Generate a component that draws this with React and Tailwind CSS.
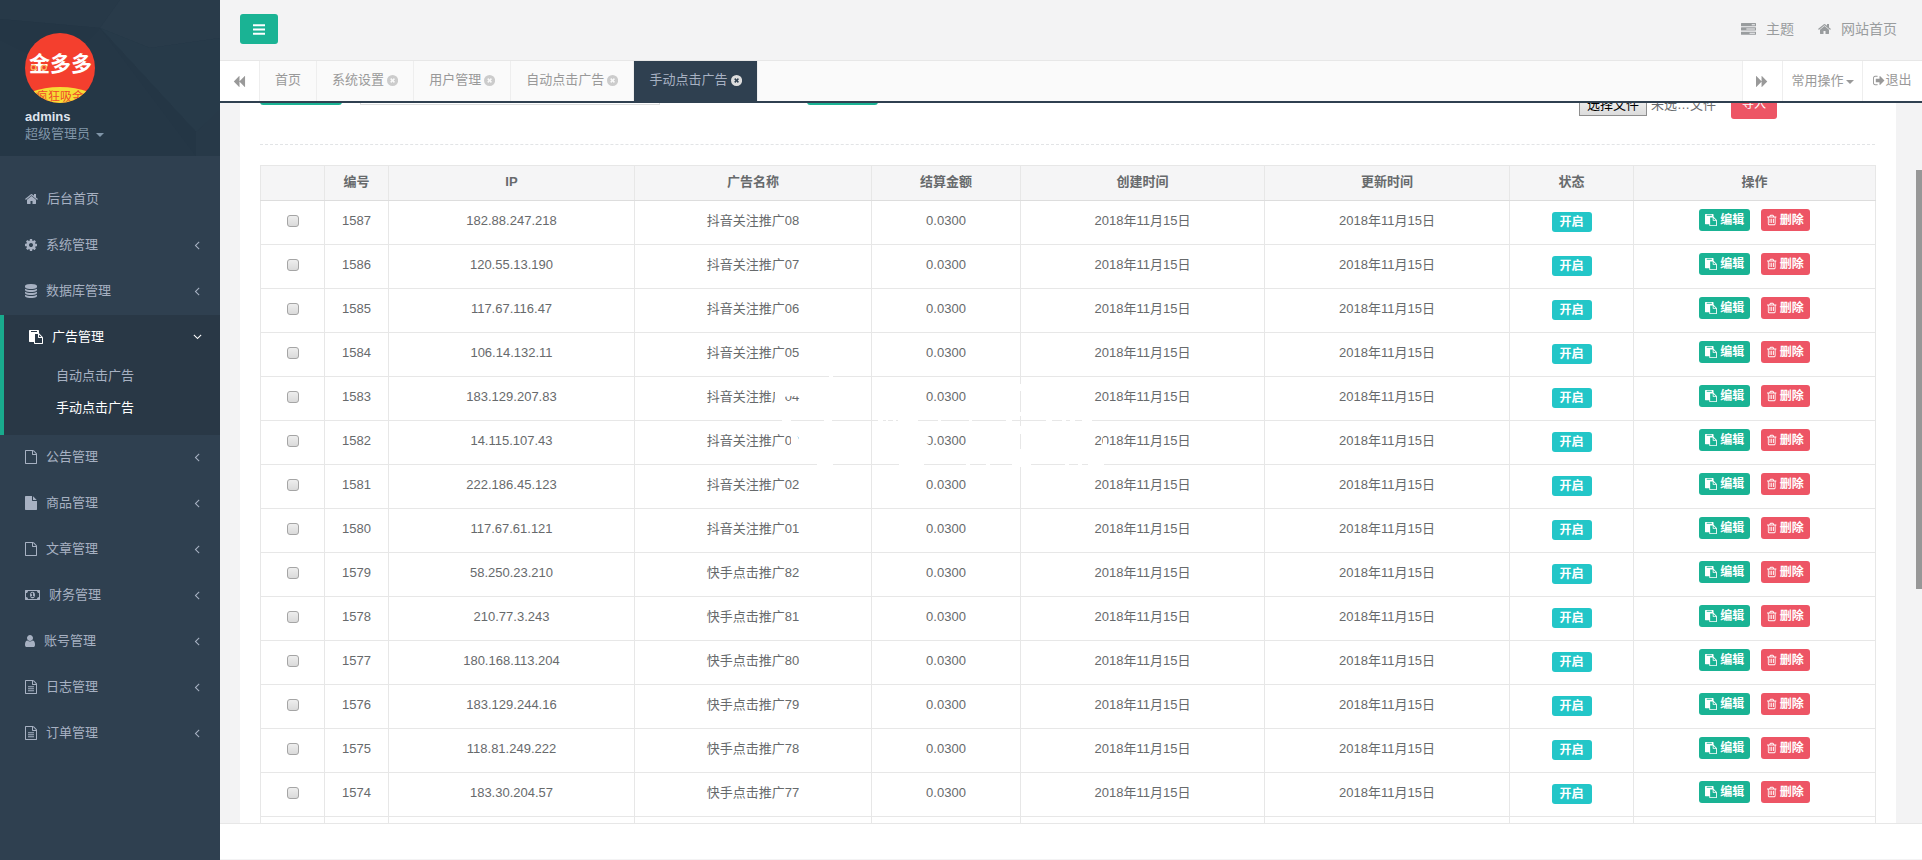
import React from "react";

const FILE_O =
  "M1596 380q28 28 48 76t20 88v1152q0 40-28 68t-68 28h-1344q-40 0-68-28t-28-68v-1600q0-40 28-68t68-28h896q40 0 88 20t76 48zm-444-244v376h376q-10-29-22-41l-313-313q-12-12-41-22zm384 1528v-1024h-416q-40 0-68-28t-28-68v-416h-768v1536h1280z";

const ICONS = {
  home: ["64 0 1664 1792", "M1472 992v480q0 26-19 45t-45 19h-384v-384h-256v384h-384q-26 0-45-19t-19-45v-480q0-1 .5-3t.5-3l575-474 575 474q1 2 1 6zm223-69l-62 74q-8 9-21 11h-3q-13 0-21-7l-692-577-692 577q-12 8-24 7-13-2-21-11l-62-74q-8-10-7-23.5t11-21.5l719-599q32-26 76-26t76 26l244 204v-195q0-14 9-23t23-9h192q14 0 23 9t9 23v408l219 182q10 8 11 21.5t-7 23.5z"],
  cog: ["128 0 1536 1792", "M1152 896q0-106-75-181t-181-75-181 75-75 181 75 181 181 75 181-75 75-181zm512-109v222q0 12-8 23t-20 13l-185 28q-19 54-39 91 35 50 107 138 10 12 10 25t-9 23q-27 37-99 108t-94 71q-12 0-26-9l-138-108q-44 23-91 38-16 136-29 186-7 28-36 28h-222q-14 0-24.5-8.5t-11.5-21.5l-28-184q-49-16-90-37l-141 107q-10 9-25 9-14 0-25-11-126-114-165-168-7-10-7-23 0-12 8-23 15-21 51-66.5t54-70.5q-27-50-41-99l-183-27q-13-2-21-12.5t-8-23.5v-222q0-12 8-23t19-13l186-28q14-46 39-92-40-57-107-138-10-12-10-24 0-10 9-23 26-36 98.5-107.5t94.5-71.5q13 0 26 10l138 107q44-23 91-38 16-136 29-186 7-28 36-28h222q14 0 24.5 8.5t11.5 21.5l28 184q49 16 90 37l142-107q9-9 24-9 13 0 25 10 129 119 165 170 7 8 7 22 0 12-8 23-15 21-51 66.5t-54 70.5q26 50 41 98l183 28q13 2 21 12.5t8 23.5z"],
  database: ["128 0 1536 1792", "M896 768q237 0 443-43t325-127v170q0 69-103 128t-280 93.5-385 34.5-385-34.5-280-93.5-103-128v-170q119 84 325 127t443 43zm0 768q237 0 443-43t325-127v170q0 69-103 128t-280 93.5-385 34.5-385-34.5-280-93.5-103-128v-170q119 84 325 127t443 43zm0-384q237 0 443-43t325-127v170q0 69-103 128t-280 93.5-385 34.5-385-34.5-280-93.5-103-128v-170q119 84 325 127t443 43zm0-1152q208 0 385 34.5t280 93.5 103 128v128q0 69-103 128t-280 93.5-385 34.5-385-34.5-280-93.5-103-128v-128q0-69 103-128t280-93.5 385-34.5z"],
  paste: ["0 0 1792 1792", "M768 1664h896v-640h-416q-40 0-68-28t-28-68v-416h-384v1152zm256-1440v-64q0-13-9.5-22.5t-22.5-9.5h-704q-13 0-22.5 9.5t-9.5 22.5v64q0 13 9.5 22.5t22.5 9.5h704q13 0 22.5-9.5t9.5-22.5zm256 672h299l-299-299v299zm512 128v672q0 40-28 68t-68 28h-960q-40 0-68-28t-28-68v-160h-544q-40 0-68-28t-28-68v-1344q0-40 28-68t68-28h1088q40 0 68 28t28 68v328q21 13 36 28l408 408q28 28 48 76t20 88z"],
  fileO: ["128 0 1536 1792", FILE_O],
  file: ["128 0 1536 1792", "M1152 512v-472q22 14 36 28l408 408q14 14 28 36h-472zm-128 32q0 40 28 68t68 28h544v1056q0 40-28 68t-68 28h-1344q-40 0-68-28t-28-68v-1600q0-40 28-68t68-28h800v544z"],
  fileText: ["128 0 1536 1792", FILE_O + "M512 832q0-14 9-23t23-9h704q14 0 23 9t9 23v64q0 14-9 23t-23 9h-704q-14 0-23-9t-9-23v-64zm736 224q14 0 23 9t9 23v64q0 14-9 23t-23 9h-704q-14 0-23-9t-9-23v-64q0-14 9-23t23-9h704zm0 256q14 0 23 9t9 23v64q0 14-9 23t-23 9h-704q-14 0-23-9t-9-23v-64q0-14 9-23t23-9h704z"],
  money: ["0 0 1920 1792", "M768 1152h384v-96h-128v-448h-114l-148 137 77 80q42-37 55-57h2v288h-128v96zm512-256q0 70-21 142t-59.5 134-101.5 101-138 39-138-39-101.5-101-59.5-134-21-142 21-142 59.5-134 101.5-101 138-39 138 39 101.5 101 59.5 134 21 142zm512 256v-512q-106 0-181-75t-75-181h-1152q0 106-75 181t-181 75v512q106 0 181 75t75 181h1152q0-106 75-181t181-75zm128-832v1152q0 26-19 45t-45 19h-1792q-26 0-45-19t-19-45v-1152q0-26 19-45t45-19h1792q26 0 45 19t19 45z"],
  user: ["256 0 1280 1792", "M1536 1399q0 109-62.5 187t-150.5 78h-854q-88 0-150.5-78t-62.5-187q0-85 8.500-160.500t31.500-152 58.500-131 94-89 134.500-34.500q131 128 313 128t313-128q76 0 134.500 34.500t94 89 58.500 131 31.500 152 8.500 160.500zm-256-887q0 159-112.500 271.500t-271.500 112.500-271.500-112.500-112.500-271.500 112.500-271.500 271.500-112.500 271.500 112.500 112.500 271.500z"],
  close: ["128 0 1536 1792", "M896 128a768 768 0 1 0 0 1536a768 768 0 1 0 0-1536zm-330 590l152-152 178 178 178-178 152 152-178 178 178 178-152 152-178-178-178 178-152-152 178-178z"],
  backward: ["64 0 1664 1792", "M1683 141q19-19 32-13t13 32v1472q0 26-13 32t-32-13l-710-710q-9-9-13-19v710q0 26-13 32t-32-13l-710-710q-19-19-19-45t19-45l710-710q19-19 32-13t13 32v710q4-10 13-19z"],
  signOut: ["64 0 1664 1792", "M704 1440q0 4 1 20t.5 26.5-3 23.5-10 19.5-20.5 6.5h-320q-119 0-203.500-84.500t-84.500-203.500v-704q0-119 84.500-203.500t203.500-84.500h320q13 0 22.500 9.500t9.500 22.500q0 4 1 20t.5 26.500-3 23.500-10 19.500-20.500 6.500h-320q-66 0-113 47t-47 113v704q0 66 47 113t113 47h312l11.500 1 11.500 3 8 5.500 7 9 2 13.500zm928-544q0 26-19 45l-544 544q-19 19-45 19t-45-19-19-45v-288h-448q-26 0-45-19t-19-45v-384q0-26 19-45t45-19h448v-288q0-26 19-45t45-19 45 19l544 544q19 19 19 45z"],
  trash: ["192 0 1408 1792", "M704 736v576q0 14-9 23t-23 9h-64q-14 0-23-9t-9-23v-576q0-14 9-23t23-9h64q14 0 23 9t9 23zm256 0v576q0 14-9 23t-23 9h-64q-14 0-23-9t-9-23v-576q0-14 9-23t23-9h64q14 0 23 9t9 23zm256 0v576q0 14-9 23t-23 9h-64q-14 0-23-9t-9-23v-576q0-14 9-23t23-9h64q14 0 23 9t9 23zm128 724v-948h-896v948q0 22 7 40.5t14.5 27 10.5 8.5h832q3 0 10.5-8.5t14.5-27 7-40.5zm-672-1076h448l-48-117q-7-9-17-11h-317q-10 2-17 11zm928 32v64q0 14-9 23t-23 9h-96v948q0 83-47 143.5t-113 60.5h-832q-66 0-113-58.5t-47-141.5v-952h-96q-14 0-23-9t-9-23v-64q0-14 9-23t23-9h309l70-167q15-37 54-63t79-26h320q40 0 79 26t54 63l70 167h309q14 0 23 9t9 23z"],
  tasks: ["0 0 1792 1792", "M1024 1408h640v-128h-640v128zm-384-512h1024v-128h-1024v128zm640-512h384v-128h-384v128zm512 832v256q0 26-19 45t-45 19h-1664q-26 0-45-19t-19-45v-256q0-26 19-45t45-19h1664q26 0 45 19t19 45zm0-512v256q0 26-19 45t-45 19h-1664q-26 0-45-19t-19-45v-256q0-26 19-45t45-19h1664q26 0 45 19t19 45zm0-512v256q0 26-19 45t-45 19h-1664q-26 0-45-19t-19-45v-256q0-26 19-45t45-19h1664q26 0 45 19t19 45z"],
  bars: ["128 0 1536 1792", "M1664 1344v128q0 26-19 45t-45 19h-1408q-26 0-45-19t-19-45v-128q0-26 19-45t45-19h1408q26 0 45 19t19 45zm0-512v128q0 26-19 45t-45 19h-1408q-26 0-45-19t-19-45v-128q0-26 19-45t45-19h1408q26 0 45 19t19 45zm0-512v128q0 26-19 45t-45 19h-1408q-26 0-45-19t-19-45v-128q0-26 19-45t45-19h1408q26 0 45 19t19 45z"],
  angleLeft: ["0 0 1792 1792", "M1203 544q0 13-10 23l-393 393 393 393q10 10 10 23t-10 23l-50 50q-10 10-23 10t-23-10l-466-466q-10-10-10-23t10-23l466-466q10-10 23-10t23 10l50 50q10 10 10 23z"],
};

function Icon({ name, className = "h-3.5" }) {
  const [viewBox, d] = ICONS[name];
  return (
    <svg viewBox={viewBox} className={`w-auto shrink-0 ${className}`} fill="currentColor" fillRule={name === "close" ? "evenodd" : "nonzero"} aria-hidden="true">
      <path d={d} />
    </svg>
  );
}

function Caret() {
  return <span className="mt-0.5 h-0 w-0 border-x-4 border-t-4 border-x-transparent border-t-current" />;
}

function Avatar() {
  return (
    <svg viewBox="0 0 70 70" className="h-[70px] w-[70px]" role="img" aria-label="金多多">
      <defs>
        <clipPath id="avatarClip">
          <circle cx="35" cy="35" r="35" />
        </clipPath>
      </defs>
      <g clipPath="url(#avatarClip)">
        <rect width="70" height="70" fill="#f43f2e" />
        <ellipse cx="35" cy="69" rx="39" ry="15" fill="#f6dc35" />
        <text x="35.5" y="38" textAnchor="middle" fontSize="21" fontWeight="700" fill="#fff" fontFamily="'Noto Sans CJK SC', sans-serif">
          金多多
        </text>
        <circle cx="8.5" cy="34.5" r="2.4" fill="#f43f2e" stroke="#f7b05a" strokeWidth="1.400" />
        <circle cx="19" cy="34.5" r="2.4" fill="#f43f2e" stroke="#f7b05a" strokeWidth="1.400" />
        <text x="35" y="68" textAnchor="middle" fontSize="12" fontWeight="400" fill="#ef4a2a" fontFamily="'Noto Sans CJK SC', sans-serif">
          疯狂吸金
        </text>
      </g>
    </svg>
  );
}

function ProfilePattern() {
  return (
    <svg viewBox="0 0 220 156" preserveAspectRatio="none" className="absolute inset-0 h-full w-full" aria-hidden="true">
      <rect width="220" height="156" fill="#253746" />
      <path d="M0 0H120L100 28 0 19Z" fill="#273948" />
      <path d="M120 0H220V38L150 48 100 28Z" fill="#293b4a" />
      <path d="M100 28L150 48 220 38V112L196 132Z" fill="#273a49" />
      <path d="M0 19L100 28 60 70 0 40Z" fill="#243645" />
      <path d="M100 28L196 132V156Z" fill="#243645" />
      <path d="M196 132L220 110V156H196Z" fill="#273948" />
    </svg>
  );
}

const MENU = [
  { icon: "home", label: "后台首页" },
  { icon: "cog", label: "系统管理", arrow: true },
  { icon: "database", label: "数据库管理", arrow: true },
  { icon: "paste", label: "广告管理", arrow: true, children: ["自动点击广告", "手动点击广告"] },
  { icon: "fileO", label: "公告管理", arrow: true },
  { icon: "file", label: "商品管理", arrow: true },
  { icon: "fileO", label: "文章管理", arrow: true },
  { icon: "money", label: "财务管理", arrow: true },
  { icon: "user", label: "账号管理", arrow: true },
  { icon: "fileText", label: "日志管理", arrow: true },
  { icon: "fileText", label: "订单管理", arrow: true },
];

function Sidebar() {
  return (
    <aside className="flex w-[220px] shrink-0 flex-col bg-[#2f4050] text-[#a7b1c2]">
      <div className="relative h-[156px]">
        <ProfilePattern />
        <div className="relative flex flex-col items-start px-[25px] pt-[33px]">
          <Avatar />
          <strong className="mt-[5px] leading-[18px] text-[#dfe4ed]">admins</strong>
          <button type="button" className="flex items-center gap-1.5 leading-4 text-[#8095a8]">
            超级管理员 <Caret />
          </button>
        </div>
      </div>
      <nav className="pt-[21px]">
        <ul>
          {MENU.map((item) => (
            <li key={item.label} className={item.children ? "border-l-4 border-[#19aa8d] bg-[#293846] pb-2.5" : ""}>
              <a
                href="#"
                className={`flex h-[46px] items-center gap-[9px] pr-4 pb-0.5 pl-[25px] ${item.children ? "text-white" : ""}`}
              >
                <Icon name={item.icon} />
                <span className="flex-1">{item.label}</span>
                {item.arrow && <Icon name="angleLeft" className={item.children ? "h-3.5 -rotate-90" : "h-3.5"} />}
              </a>
              {item.children && (
                <ul>
                  {item.children.map((child, i) => (
                    <li key={child}>
                      <a href="#" className={`flex h-8 items-center pb-0.5 pl-[52px] ${i === 1 ? "text-white" : ""}`}>
                        {child}
                      </a>
                    </li>
                  ))}
                </ul>
              )}
            </li>
          ))}
        </ul>
      </nav>
    </aside>
  );
}

const TABS = ["首页", "系统设置", "用户管理", "自动点击广告", "手动点击广告"];

function TabBar() {
  return (
    <div className="flex h-[42px] shrink-0 border-b-2 border-[#2f4050] bg-[#fafafa] text-[#999]">
      <button type="button" aria-label="向左" className="flex w-10 items-center justify-center border-r border-[#eee] bg-white">
        <Icon name="backward" className="h-[13px]" />
      </button>
      <nav className="flex flex-1">
        {TABS.map((tab, i) => (
          <a
            key={tab}
            href="#"
            className={`flex items-center gap-[3px] border-r border-[#eee] px-[15px] pb-0.5 ${i === 4 ? "bg-[#2f4050] text-[#a7b1c2]" : ""}`}
          >
            {tab}
            {i > 0 && <Icon name="close" className={i === 4 ? "h-[13px] text-[#ddd]" : "h-[13px] text-[#ccc]"} />}
          </a>
        ))}
      </nav>
      <button type="button" aria-label="向右" className="flex w-10 items-center justify-center border-l border-[#eee] bg-white">
        <Icon name="backward" className="h-[13px] rotate-180" />
      </button>
      <button type="button" className="flex w-20 items-center justify-center gap-0.5 border-l border-[#eee] bg-white">
        常用操作
        <Caret />
      </button>
      <a href="#" className="flex w-[60px] items-center justify-center border-l border-[#eee] bg-white pb-0.5">
        <Icon name="signOut" className="h-[13px]" />
        退出
      </a>
    </div>
  );
}

const IPS = [
  "182.88.247.218",
  "120.55.13.190",
  "117.67.116.47",
  "106.14.132.11",
  "183.129.207.83",
  "14.115.107.43",
  "222.186.45.123",
  "117.67.61.121",
  "58.250.23.210",
  "210.77.3.243",
  "180.168.113.204",
  "183.129.244.16",
  "118.81.249.222",
  "183.30.204.57",
];

const ROWS = IPS.map((ip, i) => ({
  id: 1587 - i,
  ip,
  name: i < 8 ? `抖音关注推广0${8 - i}` : `快手点击推广${90 - i}`,
}));

const CELL = "h-11 border border-[#e7e7e7] pb-1";

function AdTable() {
  return (
    <table className="w-full table-fixed border-collapse border border-[#e7e7e7] text-center">
      <colgroup>
        <col className="w-[64px]" />
        <col className="w-[64px]" />
        <col className="w-[246px]" />
        <col className="w-[237px]" />
        <col className="w-[149px]" />
        <col className="w-[244px]" />
        <col className="w-[245px]" />
        <col className="w-[124px]" />
        <col className="w-[242px]" />
      </colgroup>
      <thead>
        <tr className="bg-[#f5f5f6]">
          {["", "编号", "IP", "广告名称", "结算金额", "创建时间", "更新时间", "状态", "操作"].map((h) => (
            <th key={h} className="h-[35px] border border-[#e7e7e7] border-b-[#ddd] pb-0.5 font-bold">
              {h}
            </th>
          ))}
        </tr>
      </thead>
      <tbody>
        {ROWS.map((row) => (
          <tr key={row.id}>
            <td className={CELL}>
              <input
                type="checkbox"
                aria-label={`选择 ${row.id}`}
                className="mx-auto block h-3 w-3 appearance-none rounded-[3px] border border-[#a5a5a5] bg-linear-to-b from-[#eee] to-[#dadada]"
              />
            </td>
            <td className={CELL}>{row.id}</td>
            <td className={CELL}>{row.ip}</td>
            <td className={CELL}>{row.name}</td>
            <td className={CELL}>0.0300</td>
            <td className={CELL}>2018年11月15日</td>
            <td className={CELL}>2018年11月15日</td>
            <td className="border border-[#e7e7e7] pb-0.5">
              <span className="inline-flex h-5 w-10 items-center justify-center rounded-[3px] bg-[#23c6c8] align-middle text-xs font-bold text-white">
                开启
              </span>
            </td>
            <td className="border border-[#e7e7e7] pt-2 align-top">
              <div className="flex justify-center gap-[11px] text-xs font-bold text-white">
                <button type="button" className="flex h-[22px] items-center gap-[3px] rounded-[3px] bg-[#1ab394] px-[6px]">
                  <Icon name="paste" className="h-3" />
                  编辑
                </button>
                <button type="button" className="flex h-[22px] items-center gap-[3px] rounded-[3px] bg-[#ed5565] px-[6px]">
                  <Icon name="trash" className="h-3" />
                  删除
                </button>
              </div>
            </td>
          </tr>
        ))}
        <tr>
          {Array.from({ length: 9 }, (_, i) => (
            <td key={i} className={CELL} />
          ))}
        </tr>
      </tbody>
    </table>
  );
}

function Watermark() {
  return (
    <svg width="420" height="110" className="pointer-events-none absolute top-[291px] left-[520px]" fill="#fff" aria-hidden="true">
      <path d="M14 18L20 16 27 22 24 35 16 36Z" />
      <path d="M22 20H40V31Q32 29 24 31Z" />
      <path d="M31 60H40V66L37 69 40 76V80H31Z" />
      <path d="M69 9h4v4h-4zM22 53h9v4h-9zM64 53h8v4h-8zM57 97h16v4H57z" />
      <path d="M118 53h5v4h-5zM126 53h2v4h-2zM133 53h3v4h-3zM138 53h20v4h-20zM178 53h3v4h-3zM209 53h3v4h-3zM246 53h6v4h-6z" />
      <path d="M139 97h25v4h-25zM206 97h4v4h-4zM226 97h4v4h-4zM252 97h19v4h-19z" />
      <path d="M286 53h6v4h-6zM302 53h4v4h-4zM310 53h5v4h-5zM322 53h10v4h-10zM305 97h4v4h-4zM318 97h4v4h-4zM328 97h16v4h-16z" />
      <path d="M259 18h3v7h-3zM259 46h3v4h-3zM259 60h3v8h-3zM259 83h3v18h-3z" />
      <path d="M166 70L170 71 169 78 166 77ZM343 72H347V79H343Z" />
    </svg>
  );
}

export default function App() {
  return (
    <div className="flex h-screen overflow-hidden bg-[#f3f3f4] font-['Liberation_Sans','Noto_Sans_CJK_SC',sans-serif] text-[13px] leading-[18px] text-[#676a6c]">
      <Sidebar />
      <div className="flex min-w-0 flex-1 flex-col">
        <header className="flex h-[61px] shrink-0 items-center justify-between border-b border-[#e7e7e7] pr-[25px] pb-0.5 pl-5">
          <button type="button" aria-label="菜单" className="flex h-[30px] w-[38px] items-center justify-center rounded-[3px] bg-[#1ab394] text-white">
            <Icon name="bars" className="h-[15px]" />
          </button>
          <nav className="flex items-center gap-6 text-sm text-[#999c9e]">
            <a href="#" className="flex items-center gap-2.5">
              <Icon name="tasks" className="h-[15px]" />
              主题
            </a>
            <a href="#" className="flex items-center gap-2.5">
              <Icon name="home" />
              网站首页
            </a>
          </nav>
        </header>
        <TabBar />
        <main className="flex min-h-0 flex-1 overflow-hidden">
          <div className="-mt-7 min-w-0 flex-1 self-start px-5">
            <div className="relative bg-white pr-[21px] pl-5">
              <form className="flex h-[69px] items-start">
                <button type="button" className="h-[30px] w-[82px] rounded-[3px] bg-[#1ab394]" aria-label="添加" />
                <input type="text" aria-label="关键字" className="ml-[18px] h-[30px] w-[300px] border border-[#dcdddd]" />
                <button type="button" className="ml-[147px] h-[30px] w-[71px] rounded-[3px] bg-[#1ab394]" aria-label="搜索" />
                <div className="mt-2.5 mr-[98px] ml-auto flex items-center">
                  <label className="flex items-center gap-1 pt-1.5">
                    <input type="file" className="sr-only" />
                    <span className="flex h-[22px] w-[68px] items-center justify-center border border-[#8e8e8e] bg-linear-to-b from-[#f5f5f5] to-[#dcdcdc] text-black">
                      选择文件
                    </span>
                    <span>未选…文件</span>
                  </label>
                  <button type="button" className="ml-[15px] flex h-[34px] w-[46px] items-center justify-center rounded-[3px] bg-[#ed5565] pt-1 text-xs text-white">
                    导入
                  </button>
                </div>
              </form>
              <hr className="mb-5 border-t border-dashed border-[#e2e4e6]" />
              <AdTable />
              <Watermark />
            </div>
          </div>
          <div className="w-1.5 shrink-0 bg-[#f3f3f4] pt-[67px]">
            <div className="h-[419px] bg-[#979797]" />
          </div>
        </main>
        <footer className="h-[37px] shrink-0 border-t border-b border-t-[#e7e7e7] border-b-[#f3f3f4] bg-white" />
      </div>
    </div>
  );
}
